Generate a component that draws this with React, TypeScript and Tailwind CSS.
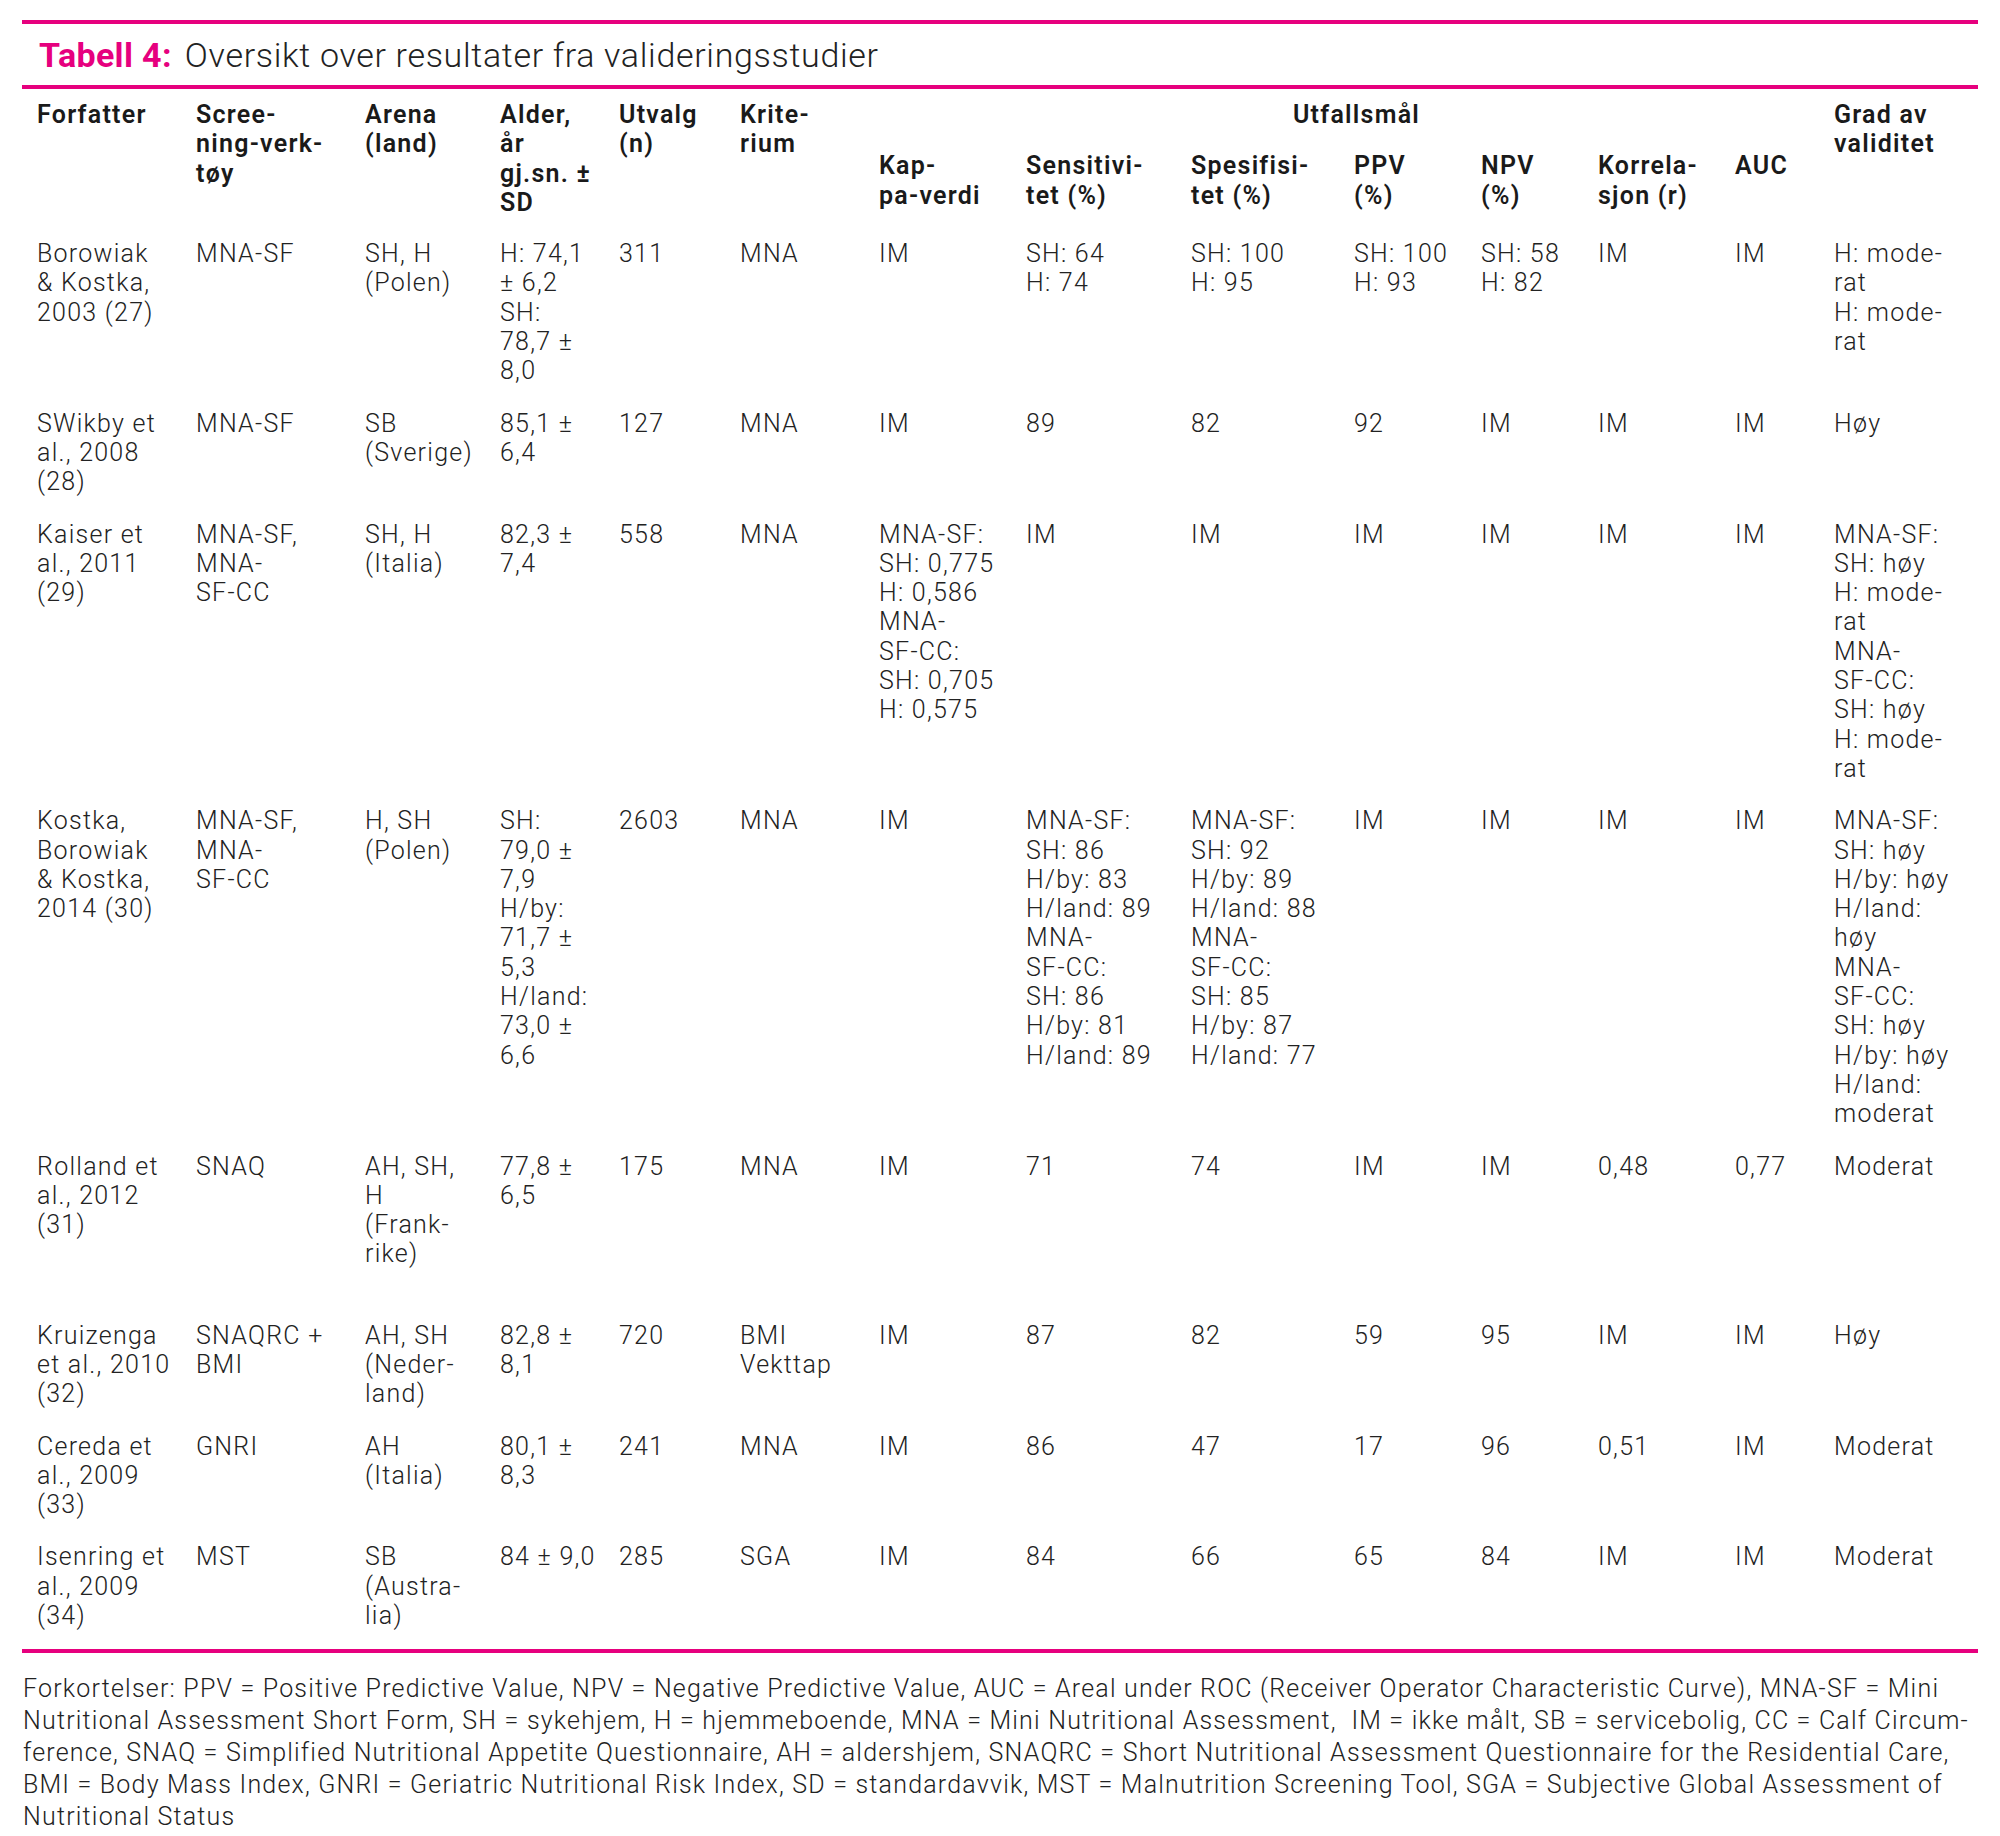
import React from 'react';

const ROW = 'grid grid-cols-[174px_169px_135px_119px_121px_139px_147px_165px_163px_127px_117px_137px_99px_143px]';

type Row = { cells: string[][]; pad: string };

const rows: Row[] = [
  {
    pad: 'pb-[23px]',
    cells: [
      ['Borowiak', '& Kostka,', '2003 (27)'],
      ['MNA-SF'],
      ['SH, H', '(Polen)'],
      ['H: 74,1', '± 6,2', 'SH:', '78,7 ±', '8,0'],
      ['311'],
      ['MNA'],
      ['IM'],
      ['SH: 64', 'H: 74'],
      ['SH: 100', 'H: 95'],
      ['SH: 100', 'H: 93'],
      ['SH: 58', 'H: 82'],
      ['IM'],
      ['IM'],
      ['H: mode-', 'rat', 'H: mode-', 'rat'],
    ],
  },
  {
    pad: 'pb-[23px]',
    cells: [
      ['SWikby et', 'al., 2008', '(28)'],
      ['MNA-SF'],
      ['SB', '(Sverige)'],
      ['85,1 ±', '6,4'],
      ['127'],
      ['MNA'],
      ['IM'],
      ['89'],
      ['82'],
      ['92'],
      ['IM'],
      ['IM'],
      ['IM'],
      ['Høy'],
    ],
  },
  {
    pad: 'pb-[23px]',
    cells: [
      ['Kaiser et', 'al., 2011', '(29)'],
      ['MNA-SF,', 'MNA-', 'SF-CC'],
      ['SH, H', '(Italia)'],
      ['82,3 ±', '7,4'],
      ['558'],
      ['MNA'],
      ['MNA-SF:', 'SH: 0,775', 'H: 0,586', 'MNA-', 'SF-CC:', 'SH: 0,705', 'H: 0,575'],
      ['IM'],
      ['IM'],
      ['IM'],
      ['IM'],
      ['IM'],
      ['IM'],
      ['MNA-SF:', 'SH: høy', 'H: mode-', 'rat', 'MNA-', 'SF-CC:', 'SH: høy', 'H: mode-', 'rat'],
    ],
  },
  {
    pad: 'pb-[23px]',
    cells: [
      ['Kostka,', 'Borowiak', '& Kostka,', '2014 (30)'],
      ['MNA-SF,', 'MNA-', 'SF-CC'],
      ['H, SH', '(Polen)'],
      ['SH:', '79,0 ±', '7,9', 'H/by:', '71,7 ±', '5,3', 'H/land:', '73,0 ±', '6,6'],
      ['2603'],
      ['MNA'],
      ['IM'],
      ['MNA-SF:', 'SH: 86', 'H/by: 83', 'H/land: 89', 'MNA-', 'SF-CC:', 'SH: 86', 'H/by: 81', 'H/land: 89'],
      ['MNA-SF:', 'SH: 92', 'H/by: 89', 'H/land: 88', 'MNA-', 'SF-CC:', 'SH: 85', 'H/by: 87', 'H/land: 77'],
      ['IM'],
      ['IM'],
      ['IM'],
      ['IM'],
      ['MNA-SF:', 'SH: høy', 'H/by: høy', 'H/land:', 'høy', 'MNA-', 'SF-CC:', 'SH: høy', 'H/by: høy', 'H/land:', 'moderat'],
    ],
  },
  {
    // this row has an empty line's worth of extra space in the print
    pad: 'pb-[52px]',
    cells: [
      ['Rolland et', 'al., 2012', '(31)'],
      ['SNAQ'],
      ['AH, SH,', 'H', '(Frank-', 'rike)'],
      ['77,8 ±', '6,5'],
      ['175'],
      ['MNA'],
      ['IM'],
      ['71'],
      ['74'],
      ['IM'],
      ['IM'],
      ['0,48'],
      ['0,77'],
      ['Moderat'],
    ],
  },
  {
    pad: 'pb-[23px]',
    cells: [
      ['Kruizenga', 'et al., 2010', '(32)'],
      ['SNAQRC +', 'BMI'],
      ['AH, SH', '(Neder-', 'land)'],
      ['82,8 ±', '8,1'],
      ['720'],
      ['BMI', 'Vekttap'],
      ['IM'],
      ['87'],
      ['82'],
      ['59'],
      ['95'],
      ['IM'],
      ['IM'],
      ['Høy'],
    ],
  },
  {
    pad: 'pb-[23px]',
    cells: [
      ['Cereda et', 'al., 2009', '(33)'],
      ['GNRI'],
      ['AH', '(Italia)'],
      ['80,1 ±', '8,3'],
      ['241'],
      ['MNA'],
      ['IM'],
      ['86'],
      ['47'],
      ['17'],
      ['96'],
      ['0,51'],
      ['IM'],
      ['Moderat'],
    ],
  },
  {
    pad: 'pb-[19px]',
    cells: [
      ['Isenring et', 'al., 2009', '(34)'],
      ['MST'],
      ['SB', '(Austra-', 'lia)'],
      ['84 ± 9,0'],
      ['285'],
      ['SGA'],
      ['IM'],
      ['84'],
      ['66'],
      ['65'],
      ['84'],
      ['IM'],
      ['IM'],
      ['Moderat'],
    ],
  },
];

const footnote = [
  'Forkortelser: PPV = Positive Predictive Value, NPV = Negative Predictive Value, AUC = Areal under ROC (Receiver Operator Characteristic Curve), MNA-SF = Mini',
  'Nutritional Assessment Short Form, SH = sykehjem, H = hjemmeboende, MNA = Mini Nutritional Assessment,  IM = ikke målt, SB = servicebolig, CC = Calf Circum-',
  'ference, SNAQ = Simplified Nutritional Appetite Questionnaire, AH = aldershjem, SNAQRC = Short Nutritional Assessment Questionnaire for the Residential Care,',
  'BMI = Body Mass Index, GNRI = Geriatric Nutritional Risk Index, SD = standardavvik, MST = Malnutrition Screening Tool, SGA = Subjective Global Assessment of',
  'Nutritional Status',
];

const Lines = ({ lines, className = '' }: { lines: string[]; className?: string }) => (
  <div className={className}>
    {lines.map((l, i) => (
      <div key={i} className="whitespace-pre">
        {l}
      </div>
    ))}
  </div>
);

const PinkRule = () => <div className="h-[4px] bg-[#e6007e]" />;

export default function App() {
  return (
    <div className="h-[1836px] w-[2000px] overflow-hidden bg-white px-[22px] pt-[20px] font-['Roboto',sans-serif] text-[#222]">
      <PinkRule />
      <div className="flex h-[61px] items-center gap-[13px] pl-[17px] text-[34px] leading-none">
        <span className="font-bold tracking-[0.01em] text-[#e6007e]">Tabell 4:</span>
        <span className="font-light tracking-[0.02em]">Oversikt over resultater fra valideringsstudier</span>
      </div>
      <PinkRule />

      {/* header */}
      <div className="grid grid-cols-[174px_169px_135px_119px_121px_139px_955px_143px] pt-[11px] pb-[22px] text-[25px] leading-[29.3px] font-semibold tracking-[0.05em] text-[#1a1a1a]">
        <Lines className="pl-[15px]" lines={['Forfatter']} />
        <Lines lines={['Scree-', 'ning-verk-', 'tøy']} />
        <Lines lines={['Arena', '(land)']} />
        <Lines lines={['Alder,', 'år', 'gj.sn. ±', 'SD']} />
        <Lines lines={['Utvalg', '(n)']} />
        <Lines lines={['Krite-', 'rium']} />
        <div>
          <div className="mb-[22px] text-center">Utfallsmål</div>
          <div className="grid grid-cols-[147px_165px_163px_127px_117px_137px_99px]">
            <Lines lines={['Kap-', 'pa-verdi']} />
            <Lines lines={['Sensitivi-', 'tet (%)']} />
            <Lines lines={['Spesifisi-', 'tet (%)']} />
            <Lines lines={['PPV', '(%)']} />
            <Lines lines={['NPV', '(%)']} />
            <Lines lines={['Korrela-', 'sjon (r)']} />
            <Lines lines={['AUC']} />
          </div>
        </div>
        <Lines lines={['Grad av', 'validitet']} />
      </div>

      {/* body */}
      <div className="text-[25px] leading-[29.3px] font-light tracking-[0.05em]">
        {rows.map((r, i) => (
          <div key={i} className={`${ROW} ${r.pad}`}>
            {r.cells.map((c, j) => (
              <Lines key={j} className={j === 0 ? 'pl-[15px]' : ''} lines={c} />
            ))}
          </div>
        ))}
      </div>
      <PinkRule />

      <div className="pt-[20px] pl-[1px] text-[25px] leading-[32px] font-light tracking-[0.048em] text-[#222]">
        <Lines lines={footnote} />
      </div>
    </div>
  );
}
